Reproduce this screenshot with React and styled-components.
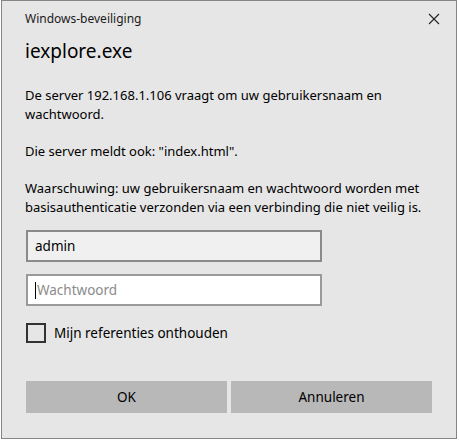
import React from "react";
import styled, { createGlobalStyle } from "styled-components";

const Global = createGlobalStyle`
  html, body { margin: 0; padding: 0; background: #ffffff; }
  body { font-family: "Noto Sans", "Open Sans", sans-serif; }
`;

const Dialog = styled.div`
  box-sizing: border-box;
  margin-left: 1px;
  width: 456px;
  height: 439px;
  background: #e6e6e6;
  border: 1px solid #858585;
  display: flex;
  flex-direction: column;
  padding: 0 0 0 23px;
  color: #000;
  font-family: "Noto Sans", sans-serif;
`;

const TitleBar = styled.div`
  display: flex;
  align-items: center;
  justify-content: space-between;
  height: 35px;
  padding-right: 16px;
`;

const TitleText = styled.div`
  font-size: 12px;
  color: #1a1a1a;
`;

const CloseBtn = styled.div`
  width: 12px;
  height: 12px;
  display: flex;
`;

const AppName = styled.div`
  font-size: 19px;
  line-height: 26px;
  margin-top: 2px;
`;

const Para = styled.p`
  margin: ${(p) => p.$top}px 0 0 0;
  font-size: 13px;
  line-height: 19px;
  width: 420px;
`;

const Field = styled.div`
  box-sizing: border-box;
  width: 296px;
  height: 32px;
  margin-top: ${(p) => p.$top}px;
  margin-left: 1px;
  border: 2px solid ${(p) => (p.$filled ? "#8a8a8a" : "#9a9a9a")};
  background: ${(p) => (p.$filled ? "#f0f0f0" : "#ffffff")};
  display: flex;
  align-items: center;
  padding-left: 7px;
  font-size: 13.5px;
  color: ${(p) => (p.$placeholder ? "#8c8c8c" : "#000")};
`;

const Caret = styled.span`
  display: inline-block;
  width: 1px;
  height: 17px;
  background: #000;
  margin-right: 1px;
`;

const CheckRow = styled.div`
  display: flex;
  align-items: center;
  margin-top: 17px;
  margin-left: 1px;
  gap: 8px;
  font-size: 13.5px;
`;

const CheckBox = styled.div`
  box-sizing: border-box;
  width: 20px;
  height: 20px;
  border: 2px solid #333333;
`;

const Buttons = styled.div`
  display: flex;
  gap: 4px;
  margin-top: 38px;
  margin-left: 1px;
`;

const Button = styled.div`
  width: 201px;
  height: 32px;
  background: #b8b8b8;
  display: flex;
  align-items: center;
  justify-content: center;
  font-size: 13.5px;
  color: #000;
`;

export default function App() {
  return (
    <>
      <Global />
      <Dialog>
        <TitleBar>
          <TitleText>Windows-beveiliging</TitleText>
          <CloseBtn>
            <svg width="12" height="12" viewBox="0 0 12 12">
              <path d="M1 1 L11 11 M11 1 L1 11" stroke="#222" strokeWidth="1.1" fill="none" />
            </svg>
          </CloseBtn>
        </TitleBar>
        <AppName>iexplore.exe</AppName>
        <Para $top={22}>
          De server 192.168.1.106 vraagt om uw gebruikersnaam en wachtwoord.
        </Para>
        <Para $top={18}>Die server meldt ook: "index.html".</Para>
        <Para $top={18}>
          Waarschuwing: uw gebruikersnaam en wachtwoord worden met
          basisauthenticatie verzonden via een verbinding die niet veilig is.
        </Para>
        <Field $top={13} $filled>admin</Field>
        <Field $top={12} $placeholder>
          <Caret />
          Wachtwoord
        </Field>
        <CheckRow>
          <CheckBox />
          Mijn referenties onthouden
        </CheckRow>
        <Buttons>
          <Button>OK</Button>
          <Button>Annuleren</Button>
        </Buttons>
      </Dialog>
    </>
  );
}
